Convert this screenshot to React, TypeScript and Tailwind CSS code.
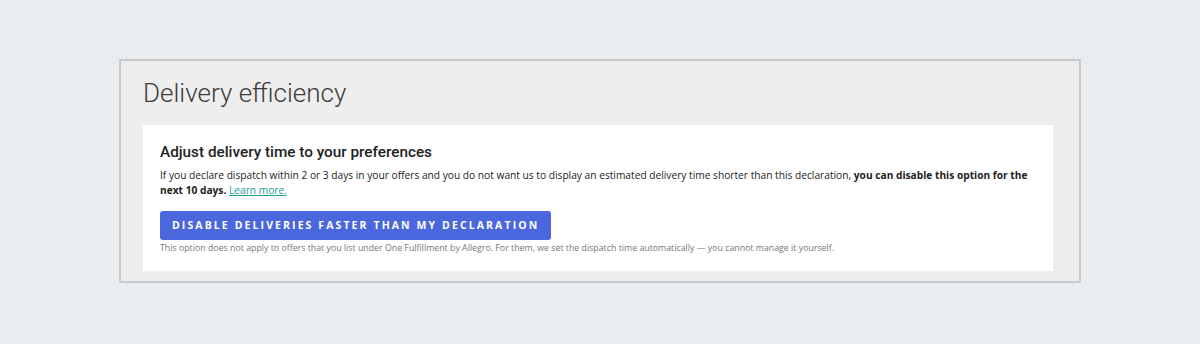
const App = () => {
  return (
    <div className="min-h-[344px] w-full bg-[#eaedf0] pt-[59px] px-[119px]">
      <div className="h-[224px] border-2 border-[#c9c9c9] bg-[#eeeeee] pl-[22px] pr-[26px] pt-[14px]">
        <h1 className="font-['Roboto',sans-serif] font-light text-[26px] leading-[36px] text-[#3c3c3c]">
          Delivery efficiency
        </h1>
        <div className="mt-[14px] h-[146px] bg-white px-[17px] pt-[17px]">
          <p className="font-['Roboto',sans-serif] font-medium text-[15.3px] leading-[20px] text-[#222222]">
            Adjust delivery time to your preferences
          </p>
          <p className="mt-[6px] font-['Open_Sans',sans-serif] text-[10.2px] leading-[15px] text-[#222222]">
            If you declare dispatch within 2 or 3 days in your offers and you do not want us to display an estimated delivery time shorter than this declaration,{" "}
            <span className="font-bold">you can disable this option for the next 10 days.</span>{" "}
            <a href="#" className="text-[#22a090] underline">
              Learn more.
            </a>
          </p>
          <button className="mt-[13px] h-[29px] rounded-[3px] bg-[#4a67dd] px-[12px] font-['Open_Sans',sans-serif] text-[10.5px] font-bold uppercase tracking-[2.1px] text-white">
            Disable deliveries faster than my declaration
          </button>
          <p className="mt-[2px] font-['Open_Sans',sans-serif] text-[8.8px] leading-[12px] text-[#777777]">
            This option does not apply to offers that you list under One Fulfillment by Allegro. For them, we set the dispatch time automatically — you cannot manage it yourself.
          </p>
        </div>
      </div>
    </div>
  );
};

export default App;
